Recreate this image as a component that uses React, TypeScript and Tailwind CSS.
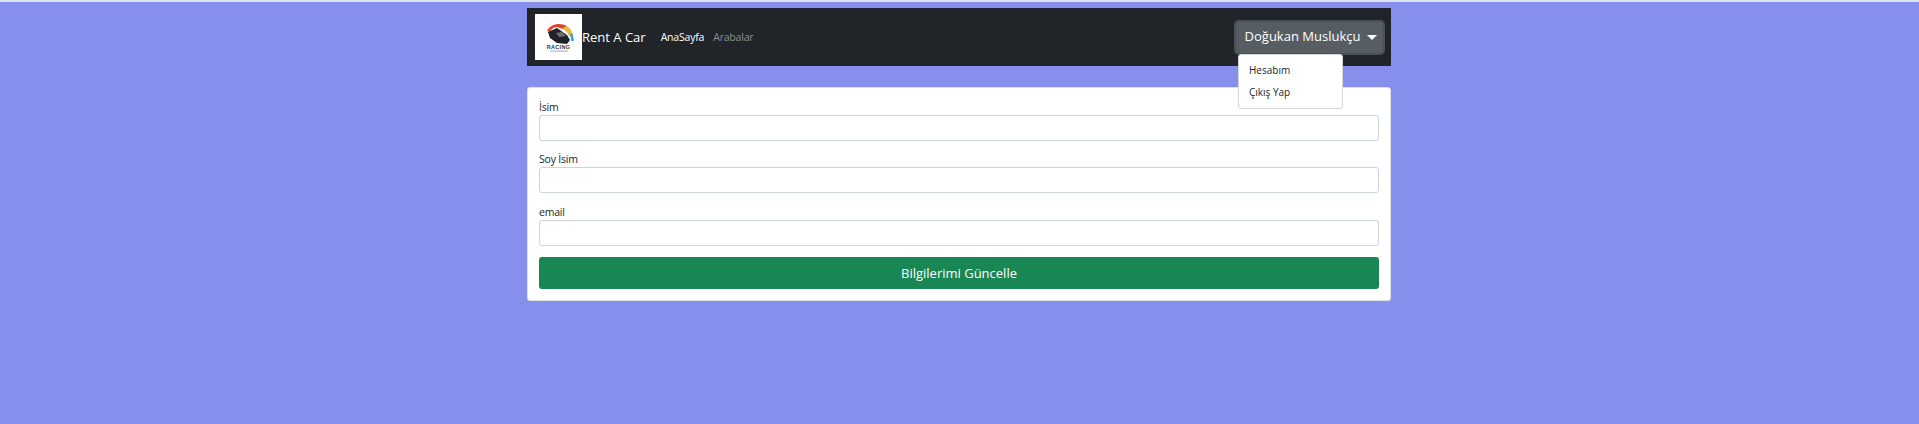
export default function App() {
  return (
    <div className="h-[424px] bg-[#8690ec] font-['Open_Sans','Noto_Sans',sans-serif] overflow-hidden">
      <div className="h-[2px] bg-[#dee2e6]" />
      <div className="w-[864px] ml-[527px] pt-[6px]">
        <nav className="relative h-[58px] bg-[#212529] flex items-center pl-[8px] pr-[6px]">
          <div className="w-[47px] h-[46px] bg-white flex items-center justify-center shrink-0">
            <svg width="32" height="32" viewBox="0 0 32 32">
              <path d="M4 10 C7 3 17 1 24 5 L19 8 C14 5 9 6 7 11 Z" fill="#d9472b" />
              <path d="M24 5 C27 7 29 10 30 14 L26 15 C25 12 22 9 19 8 Z" fill="#e8b83a" />
              <path d="M29.5 12.5 L31 20 L28.5 20 L27 13.5 Z" fill="#3a9bd5" />
              <path d="M5 11 L14 7 L24 14 L27 19 L24 23 L14 22 L7 17 Z" fill="#1f2227" />
              <path d="M13 12 L19 11 L23 15 L16 16 Z" fill="#6b7078" />
              <text x="15.5" y="28" textAnchor="middle" fontSize="5.5" fontWeight="800" fill="#33363b" fontFamily="'Liberation Sans',sans-serif" letterSpacing="0.3">RACING</text>
              <rect x="7" y="29.5" width="18" height="1.2" fill="#b5b8bd" />
            </svg>
          </div>
          <span className="text-white text-[13px] leading-none whitespace-nowrap">Rent A Car</span>
          <span className="ml-[15px] text-white text-[10.5px] leading-none tracking-[-0.2px]">AnaSayfa</span>
          <span className="ml-[9px] text-[#8c8f93] text-[10.5px] leading-none tracking-[-0.2px]">Arabalar</span>
          <button className="ml-auto h-[35px] w-[151px] rounded-[5px] bg-[#565e64] border-[2px] border-[#4a5056] pl-[3px] text-white text-[13px] flex items-center justify-center gap-[7px]">
            Doğukan Muslukçu
            <span className="w-0 h-0 border-x-[5px] border-x-transparent border-t-[5px] border-t-white" />
          </button>
          <div className="absolute left-[711px] top-[46px] w-[105px] h-[55px] bg-white border border-[#d5d6da] rounded-[3px] z-10 flex flex-col pt-[7px] pl-[10px] text-[10px] text-[#212529] gap-[6px] leading-[16px]">
            <span>Hesabım</span>
            <span>Çıkış Yap</span>
          </div>
        </nav>
        <form className="mt-[21px] h-[214px] bg-white rounded-[3px] border border-[#dfe1e5] px-[11px] pt-[12px]">
          {["İsim", "Soy İsim", "email"].map((l, i) => (
            <div key={l} className={i === 0 ? "" : i === 1 ? "mt-[11px]" : "mt-[12px]"}>
              <div className="text-[10.5px] leading-[15px] text-[#212529] h-[15px] tracking-[-0.2px]">{l}</div>
              <input className="block w-full h-[26px] bg-white rounded-[3px] border border-[#ced4da]" />
            </div>
          ))}
          <button type="button" className="mt-[11px] w-full h-[32px] rounded-[3px] bg-[#198754] text-white text-[13px] leading-none">
            Bilgilerimi Güncelle
          </button>
        </form>
      </div>
    </div>
  );
}
